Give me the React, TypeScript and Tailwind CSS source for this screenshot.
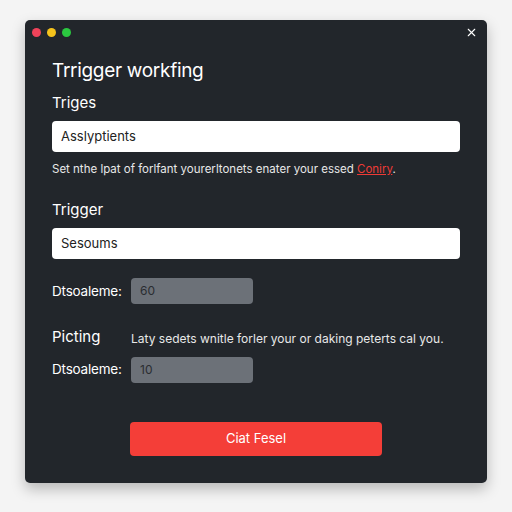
import { X } from 'lucide-react'

const font = { fontFamily: 'Inter, "Noto Sans", sans-serif' }

function NumberRow({ label, value }: { label: string; value: string }) {
  return (
    <div className="flex items-center">
      <span className="w-[79px] text-[13.5px] tracking-[-0.2px] text-white">{label}</span>
      <div className="flex h-[26px] w-[122px] items-center rounded-[4px] bg-[#6c7178] px-[9px] text-[12px] text-[#2a2d31]">
        {value}
      </div>
    </div>
  )
}

export default function App() {
  return (
    <div className="flex h-[512px] w-[512px] items-start justify-center bg-[#f4f4f4] pt-[20px]" style={font}>
      <div className="h-[463px] w-[462px] rounded-[5px] bg-[#22262b] shadow-[0_6px_14px_rgba(0,0,0,0.25)]">
        {/* Title bar */}
        <div className="flex items-center justify-between px-[7px] pt-[6px]">
          <div className="flex gap-[6px]">
            <span className="h-[9px] w-[9px] rounded-full bg-[#f0435a]" />
            <span className="h-[9px] w-[9px] rounded-full bg-[#f5c31c]" />
            <span className="h-[9px] w-[9px] rounded-full bg-[#2bc840]" />
          </div>
          <X size={13} strokeWidth={2} className="mr-[2px] text-white" />
        </div>

        <div className="px-[27px]">
          <h1 className="mt-[20px] text-[19px] leading-[24px] tracking-[-0.3px] text-white">Trrigger workfing</h1>

          <div className="mt-[10px] text-[15px] leading-[20px] text-white">Triges</div>
          <div className="mt-[8px] flex h-[31px] w-[408px] items-center rounded-[4px] bg-white px-[9px] text-[13px] text-[#222]">
            Asslyptients
          </div>
          <p className="mt-[9px] text-[11.5px] leading-[16px] text-[#e8e8e8]">
            Set nthe lpat of forlfant yourerltonets enater your essed{' '}
            <span className="text-[#ef3b36] underline">Coniry</span>.
          </p>

          <div className="mt-[23px] text-[15px] leading-[20px] text-white">Trigger</div>
          <div className="mt-[8px] flex h-[31px] w-[408px] items-center rounded-[4px] bg-white px-[9px] text-[13px] text-[#222]">
            Sesoums
          </div>

          <div className="mt-[19px]">
            <NumberRow label="Dtsoaleme:" value="60" />
          </div>

          <div className="mt-[22px] flex items-center">
            <span className="w-[79px] text-[15px] text-white">Picting</span>
            <span className="mt-[4px] text-[12px] text-[#e8e8e8]">Laty sedets wnitle forler your or daking peterts cal you.</span>
          </div>

          <div className="mt-[8px]">
            <NumberRow label="Dtsoaleme:" value="10" />
          </div>

          <div className="mt-[39px] flex pl-[78px]">
            <button className="h-[34px] w-[252px] rounded-[4px] bg-[#f43e38] text-[13px] text-white">Ciat Fesel</button>
          </div>
        </div>
      </div>
    </div>
  )
}
